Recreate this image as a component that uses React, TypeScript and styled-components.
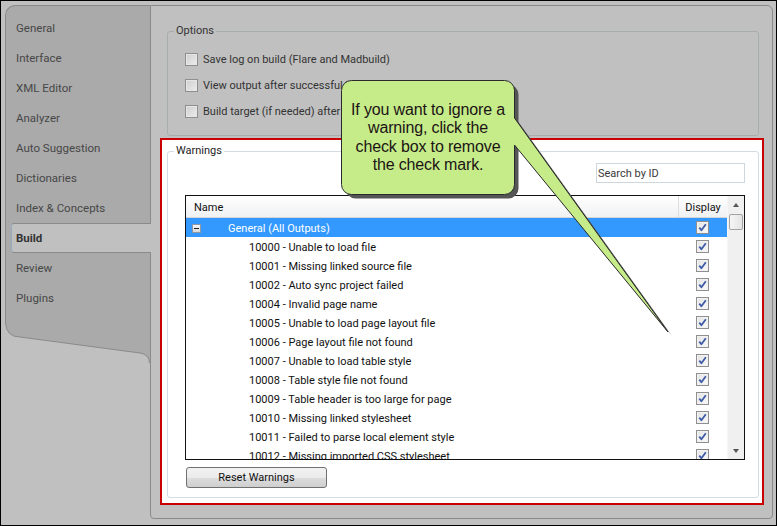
import React from "react";
import styled, { createGlobalStyle } from "styled-components";

const UI_FONT = `Roboto, "Liberation Sans", sans-serif`;

const GlobalStyle = createGlobalStyle`
  html, body { margin: 0; padding: 0; background: #c0c0c0; }
  *, *::before, *::after { box-sizing: border-box; }
`;

const Screen = styled.div`
  position: relative;
  width: 777px;
  height: 526px;
  border: 1px solid #000;
  background: #c0c0c0;
  padding: 4px 3px 0 4px;
  font-family: ${UI_FONT};
  font-size: 11px;
  overflow: hidden;
`;

const Frame = styled.div`
  display: flex;
  align-items: flex-start;
  width: 768px;
`;

const Nav = styled.nav`
  width: 145px;
  flex: none;
  display: flex;
  flex-direction: column;
`;

const NavBody = styled.div`
  background: #aaaaaa;
  border-top: 1px solid #8a8a8a;
  border-left: 1px solid #8a8a8a;
  border-top-left-radius: 10px;
  padding: 7px 0 10px;
  display: flex;
  flex-direction: column;
`;

const NavItem = styled.div<{ $active?: boolean }>`
  height: 30px;
  display: flex;
  align-items: center;
  font-size: 11.5px;
  color: ${(p) => (p.$active ? "#333" : "#474747")};
  font-weight: ${(p) => (p.$active ? 700 : 400)};
  padding-left: ${(p) => (p.$active ? "4px" : "10px")};
  margin-left: ${(p) => (p.$active ? "5px" : "0")};
  margin-right: ${(p) => (p.$active ? "-1px" : "0")};
  background: ${(p) => (p.$active ? "#c0c0c0" : "transparent")};
  border: ${(p) => (p.$active ? "1px solid #8a8a8a" : "none")};
  border-right: none;
  border-left-color: #97aac0;
  border-radius: 3px 0 0 3px;
  position: ${(p) => (p.$active ? "relative" : "static")};
  z-index: ${(p) => (p.$active ? 1 : "auto")};
`;

const NavWave = styled.svg`
  display: block;
  width: 145px;
  height: 40px;
`;

const Main = styled.main`
  width: 623px;
  height: 514px;
  flex: none;
  border: 1px solid #8a8a8a;
  border-radius: 0 6px 4px 4px;
  display: flex;
  flex-direction: column;
`;

const Group = styled.fieldset<{ $tone: "gray" | "white" }>`
  margin: 0;
  min-inline-size: 0;
  border: 1px solid ${(p) => (p.$tone === "gray" ? "#a7adad" : "#d3dce3")};
  border-radius: 3px;
`;

const OptionsGroup = styled(Group)`
  margin: 18px 13px 0 16px;
  height: 112px;
  padding: 8px 0 0 17px;
`;

const Legend = styled.legend<{ $dark?: boolean }>`
  margin-left: -11px;
  padding: 0 2px;
  font-size: 11px;
  line-height: 14px;
  color: ${(p) => (p.$dark ? "#1e1e1e" : "#333")};
`;

const OptionRow = styled.div`
  height: 26px;
  display: flex;
  align-items: center;
  gap: 5px;
  color: #333;
  white-space: nowrap;
`;

const OptBox = styled.span`
  width: 13px;
  height: 13px;
  flex: none;
  border: 1px solid #8e8f8f;
  background: linear-gradient(135deg, #cfcfcf, #ececec);
  box-shadow: inset 0 0 0 1px #e6e6e6;
`;

const Highlight = styled.section`
  margin: 2px 8px 0 9px;
  height: 367px;
  border: 2px solid #c80000;
  background: #fff;
  display: flex;
  flex-direction: column;
`;

const WarningsGroup = styled(Group)`
  margin: 4px 3px 0 5px;
  height: 354px;
  padding: 5px 13px 0 17px;
  display: flex;
  flex-direction: column;
`;

const Search = styled.div`
  align-self: flex-end;
  width: 149px;
  height: 20px;
  border: 1px solid #cfd7de;
  background: #fff;
  color: #3a3a3a;
  padding-left: 1px;
  display: flex;
  align-items: center;
`;

const Table = styled.div`
  margin-top: 12px;
  height: 265px;
  border: 1px solid #111;
  background: #fff;
  display: grid;
  grid-template-columns: 1fr 17px;
`;

const TableBody = styled.div`
  min-width: 0;
  overflow: hidden;
  display: flex;
  flex-direction: column;
`;

const HeaderRow = styled.div`
  flex: none;
  height: 22px;
  display: grid;
  grid-template-columns: 1fr 49px;
  background: linear-gradient(#ffffff, #f0f1f3);
  border-bottom: 1px solid #d5d5d5;
  color: #111;
`;

const HeaderCell = styled.div<{ $center?: boolean }>`
  display: flex;
  align-items: center;
  justify-content: ${(p) => (p.$center ? "center" : "flex-start")};
  padding: 2px 0 0 ${(p) => (p.$center ? "0" : "8px")};
  border-left: ${(p) => (p.$center ? "1px solid #dedede" : "none")};
`;

const Row = styled.div<{ $selected?: boolean }>`
  flex: none;
  height: 19px;
  display: grid;
  grid-template-columns: 1fr 49px;
  background: ${(p) => (p.$selected ? "#3399ff" : "#fff")};
  color: ${(p) => (p.$selected ? "#fff" : "#111")};
`;

const NameCell = styled.div<{ $indent: number }>`
  display: flex;
  align-items: center;
  padding: 1px 0 0 ${(p) => p.$indent}px;
  white-space: nowrap;
`;

const CheckCell = styled.div`
  display: flex;
  align-items: center;
  justify-content: center;
`;

const Collapse = styled.span`
  width: 9px;
  height: 9px;
  margin-right: 27px;
  border: 1px solid #8d98a4;
  background: linear-gradient(#f7f7f7, #d9d9d9);
  display: flex;
  align-items: center;
  justify-content: center;
  &::after {
    content: "";
    width: 5px;
    height: 1px;
    background: #222;
  }
`;

const GridBox = styled.span`
  width: 13px;
  height: 13px;
  border: 1px solid #8f8f8f;
  background: linear-gradient(135deg, #e4e4e4, #fafafa);
  box-shadow: inset 0 0 0 1px #f2f2f2;
  display: flex;
  align-items: center;
  justify-content: center;
`;

const ScrollBar = styled.div`
  background: #f0f0f0;
  border-left: 1px solid #f7f7f7;
  display: flex;
  flex-direction: column;
`;

const ScrollBtn = styled.div<{ $h: number }>`
  height: ${(p) => p.$h}px;
  flex: none;
  display: flex;
  align-items: center;
  justify-content: center;
`;

const Arrow = styled.span<{ $down?: boolean }>`
  width: 0;
  height: 0;
  border-left: 3.5px solid transparent;
  border-right: 3.5px solid transparent;
  ${(p) => (p.$down ? "border-top: 4px solid #555;" : "border-bottom: 4px solid #555;")}
`;

const Thumb = styled.div`
  height: 16px;
  margin: 0 1px;
  flex: none;
  border: 1px solid #a3a3a3;
  border-radius: 2px;
  background: linear-gradient(90deg, #f6f6f6, #e4e4e4);
`;

const Spacer = styled.div`
  flex: 1;
`;

const ResetButton = styled.button`
  margin: 7px 0 0 1px;
  width: 141px;
  height: 21px;
  border: 1px solid #707070;
  border-radius: 3px;
  background: linear-gradient(#f2f2f2 0%, #ebebeb 50%, #dddddd 51%, #cfcfcf 100%);
  font-family: ${UI_FONT};
  font-size: 11px;
  color: #111;
  padding: 0;
  align-self: flex-start;
`;

const CalloutLayer = styled.div`
  position: absolute;
  left: 340px;
  top: 79px;
  width: 340px;
  height: 262px;
  pointer-events: none;
`;

const CalloutShape = styled.svg`
  display: block;
`;

const CalloutText = styled.div`
  position: absolute;
  left: 0;
  top: 0;
  width: 174px;
  padding-top: 21px;
  text-align: center;
  font-family: "Liberation Sans", Arial, sans-serif;
  font-size: 16px;
  line-height: 18.3px;
  letter-spacing: -0.15px;
  color: #1c1414;
`;

const navItems = [
  "General",
  "Interface",
  "XML Editor",
  "Analyzer",
  "Auto Suggestion",
  "Dictionaries",
  "Index & Concepts",
  "Build",
  "Review",
  "Plugins",
];

const options = [
  "Save log on build (Flare and Madbuild)",
  "View output after successful build",
  "Build target (if needed) after changes",
];

const warnings = [
  "10000 - Unable to load file",
  "10001 - Missing linked source file",
  "10002 - Auto sync project failed",
  "10004 - Invalid page name",
  "10005 - Unable to load page layout file",
  "10006 - Page layout file not found",
  "10007 - Unable to load table style",
  "10008 - Table style file not found",
  "10009 - Table header is too large for page",
  "10010 - Missing linked stylesheet",
  "10011 - Failed to parse local element style",
  "10012 - Missing imported CSS stylesheet",
];

const Check = () => (
  <GridBox>
    <svg width="9" height="9" viewBox="0 0 9 9">
      <path d="M1.3 4.6 L3.4 7.2 L7.8 1.2" fill="none" stroke="#3d5aa6" strokeWidth="1.8" strokeLinejoin="round" />
    </svg>
  </GridBox>
);

const CALLOUT_PATH =
  "M10.5,0.5 H163.5 A10,10 0 0 1 173.5,10.5 V38 L327,252 L173.5,65 V104.5 A10,10 0 0 1 163.5,114.5 H10.5 A10,10 0 0 1 0.5,104.5 V10.5 A10,10 0 0 1 10.5,0.5 Z";

export default function App() {
  return (
    <>
      <GlobalStyle />
      <Screen>
        <Frame>
          <Nav>
            <NavBody>
              {navItems.map((n) => (
                <NavItem key={n} $active={n === "Build"}>
                  {n}
                </NavItem>
              ))}
            </NavBody>
            <NavWave viewBox="0 0 145 40">
              <path d="M0,0 H0.5 Q1.5,14 15,14 L135,30 Q144.5,31.5 144.5,40 H145 V0 Z" fill="#aaaaaa" />
              <path d="M0.5,0 Q1.5,14 15,14 L135,30 Q144.5,31.5 144.5,40" fill="none" stroke="#8a8a8a" strokeWidth="1" />
            </NavWave>
          </Nav>
          <Main>
            <OptionsGroup $tone="gray">
              <Legend>Options</Legend>
              {options.map((o) => (
                <OptionRow key={o}>
                  <OptBox />
                  {o}
                </OptionRow>
              ))}
            </OptionsGroup>
            <Highlight>
              <WarningsGroup $tone="white">
                <Legend $dark>Warnings</Legend>
                <Search>Search by ID</Search>
                <Table>
                  <TableBody>
                    <HeaderRow>
                      <HeaderCell>Name</HeaderCell>
                      <HeaderCell $center>Display</HeaderCell>
                    </HeaderRow>
                    <Row $selected>
                      <NameCell $indent={6}>
                        <Collapse />
                        General (All Outputs)
                      </NameCell>
                      <CheckCell>
                        <Check />
                      </CheckCell>
                    </Row>
                    {warnings.map((w) => (
                      <Row key={w}>
                        <NameCell $indent={63}>{w}</NameCell>
                        <CheckCell>
                          <Check />
                        </CheckCell>
                      </Row>
                    ))}
                  </TableBody>
                  <ScrollBar>
                    <ScrollBtn $h={18}>
                      <Arrow />
                    </ScrollBtn>
                    <Thumb />
                    <Spacer />
                    <ScrollBtn $h={17}>
                      <Arrow $down />
                    </ScrollBtn>
                  </ScrollBar>
                </Table>
                <ResetButton>Reset Warnings</ResetButton>
              </WarningsGroup>
            </Highlight>
          </Main>
        </Frame>
        <CalloutLayer>
          <CalloutShape width="340" height="262" viewBox="0 0 340 262">
            <path d={CALLOUT_PATH} transform="translate(4,4)" fill="#555" />
            <path d={CALLOUT_PATH} fill="#c6ec8a" stroke="#2a2a2a" strokeWidth="1" />
          </CalloutShape>
          <CalloutText>
            If you want to ignore a<br />
            warning, click the<br />
            check box to remove<br />
            the check mark.
          </CalloutText>
        </CalloutLayer>
      </Screen>
    </>
  );
}
